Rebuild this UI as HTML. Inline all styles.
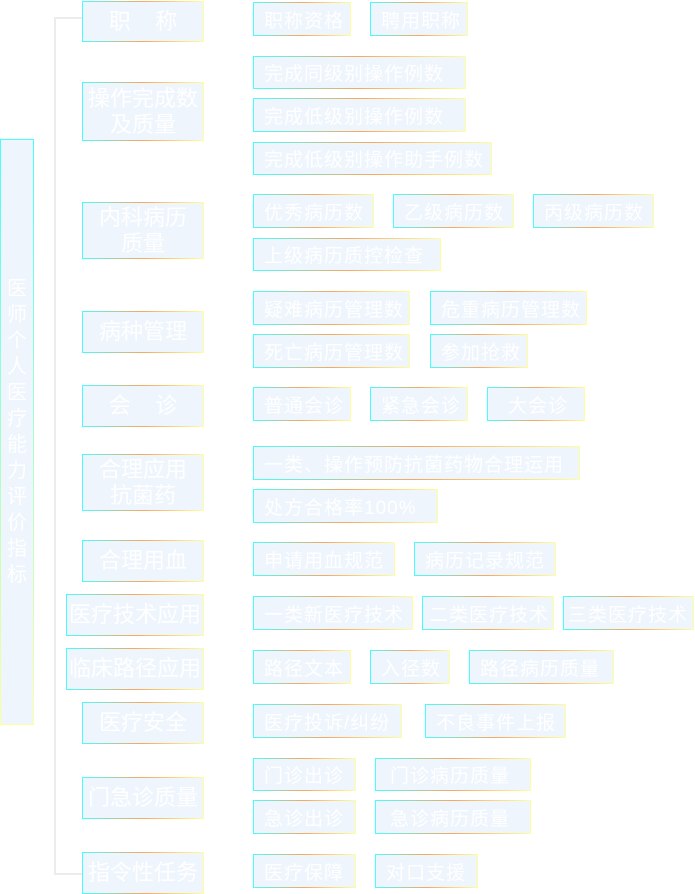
<!DOCTYPE html>
<html><head><meta charset="utf-8"><style>
*{margin:0;padding:0;box-sizing:border-box}
body{width:695px;height:894px;background:#fff;position:relative;overflow:hidden;font-family:"Liberation Sans","Noto Sans CJK SC",sans-serif;color:#fff}
.b{position:absolute;background:#eef5fd;border:1px solid;border-image:linear-gradient(to right,#4ff 0%,#f6a860 50%,#ffff99 100%) 1;display:flex;align-items:center;justify-content:center;text-align:center;white-space:nowrap}
.c{font-size:22px;line-height:26px}
.i{font-size:19px;letter-spacing:1px;justify-content:flex-start;padding-left:10px}
.ln{position:absolute;background:#ececec}
</style></head><body>
<div class="ln" style="left:54px;top:17px;width:2px;height:858px"></div>
<div class="ln" style="left:54px;top:17px;width:28px;height:2px"></div>
<div class="ln" style="left:54px;top:873px;width:28px;height:2px"></div>
<div class="b" style="left:0;top:139px;width:34px;height:586px;border-image:linear-gradient(to bottom,#4ff,#ffff99) 1;font-size:20px;line-height:26px;white-space:normal;padding:0 6px">医师个人医疗能力评价指标</div>

<div class="b c" style="left:82px;top:1px;width:122px;height:41px">职&nbsp;&nbsp;&nbsp;&nbsp;称</div>
<div class="b c" style="left:82px;top:82px;width:122px;height:59px;white-space:normal;padding:0 4px">操作完成数及质量</div>
<div class="b c" style="left:82px;top:202px;width:122px;height:57px;white-space:normal;padding:0 14px">内科病历质量</div>
<div class="b c" style="left:82px;top:311px;width:122px;height:42px">病种管理</div>
<div class="b c" style="left:82px;top:385px;width:122px;height:42px">会&nbsp;&nbsp;&nbsp;&nbsp;诊</div>
<div class="b c" style="left:82px;top:454px;width:122px;height:57px;white-space:normal;padding:0 14px">合理应用抗菌药</div>
<div class="b c" style="left:82px;top:540px;width:122px;height:42px">合理用血</div>
<div class="b c" style="left:66px;top:594px;width:138px;height:42px">医疗技术应用</div>
<div class="b c" style="left:66px;top:648px;width:138px;height:42px">临床路径应用</div>
<div class="b c" style="left:82px;top:702px;width:122px;height:42px">医疗安全</div>
<div class="b c" style="left:82px;top:777px;width:122px;height:42px">门急诊质量</div>
<div class="b c" style="left:82px;top:852px;width:122px;height:42px">指令性任务</div>

<div class="b i" style="left:253px;top:2px;width:98px;height:34px">职称资格</div>
<div class="b i" style="left:370px;top:2px;width:98px;height:34px">聘用职称</div>
<div class="b i" style="left:253px;top:56px;width:213px;height:33px">完成同级别操作例数</div>
<div class="b i" style="left:253px;top:98px;width:213px;height:34px">完成低级别操作例数</div>
<div class="b i" style="left:253px;top:142px;width:239px;height:33px">完成低级别操作助手例数</div>
<div class="b i" style="left:253px;top:194px;width:121px;height:34px">优秀病历数</div>
<div class="b i" style="left:393px;top:194px;width:121px;height:34px">乙级病历数</div>
<div class="b i" style="left:533px;top:194px;width:121px;height:34px">丙级病历数</div>
<div class="b i" style="left:253px;top:238px;width:188px;height:33px">上级病历质控检查</div>
<div class="b i" style="left:253px;top:291px;width:157px;height:34px">疑难病历管理数</div>
<div class="b i" style="left:430px;top:291px;width:157px;height:34px">危重病历管理数</div>
<div class="b i" style="left:253px;top:334px;width:157px;height:34px">死亡病历管理数</div>
<div class="b i" style="left:430px;top:334px;width:98px;height:34px">参加抢救</div>
<div class="b i" style="left:253px;top:387px;width:98px;height:34px">普通会诊</div>
<div class="b i" style="left:370px;top:387px;width:98px;height:34px">紧急会诊</div>
<div class="b i" style="left:487px;top:387px;width:98px;height:34px;padding-left:20px">大会诊</div>
<div class="b i" style="left:253px;top:446px;width:327px;height:34px">一类、操作预防抗菌药物合理运用</div>
<div class="b i" style="left:253px;top:489px;width:185px;height:34px">处方合格率100%</div>
<div class="b i" style="left:253px;top:542px;width:142px;height:34px">申请用血规范</div>
<div class="b i" style="left:414px;top:542px;width:142px;height:34px">病历记录规范</div>
<div class="b i" style="left:253px;top:596px;width:160px;height:34px">一类新医疗技术</div>
<div class="b i" style="left:422px;top:596px;width:132px;height:34px;padding-left:6px">二类医疗技术</div>
<div class="b i" style="left:563px;top:596px;width:131px;height:34px;padding-left:4px">三类医疗技术</div>
<div class="b i" style="left:253px;top:650px;width:98px;height:34px">路径文本</div>
<div class="b i" style="left:370px;top:650px;width:80px;height:34px">入径数</div>
<div class="b i" style="left:469px;top:650px;width:145px;height:34px">路径病历质量</div>
<div class="b i" style="left:253px;top:704px;width:149px;height:34px">医疗投诉/纠纷</div>
<div class="b i" style="left:425px;top:704px;width:141px;height:34px">不良事件上报</div>
<div class="b i" style="left:253px;top:758px;width:103px;height:33px">门诊出诊</div>
<div class="b i" style="left:375px;top:758px;width:156px;height:33px;padding-left:14px">门诊病历质量</div>
<div class="b i" style="left:253px;top:800px;width:103px;height:34px">急诊出诊</div>
<div class="b i" style="left:375px;top:800px;width:156px;height:34px;padding-left:14px">急诊病历质量</div>
<div class="b i" style="left:253px;top:854px;width:103px;height:34px">医疗保障</div>
<div class="b i" style="left:375px;top:854px;width:103px;height:34px">对口支援</div>
</body></html>
